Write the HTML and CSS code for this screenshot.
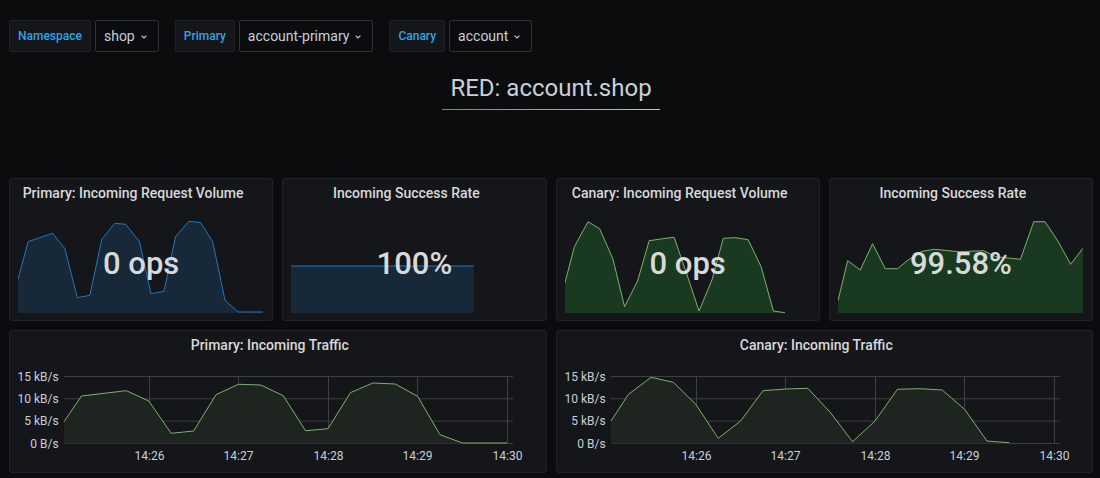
FILE: index.html
```html
<!DOCTYPE html>
<html lang="en">
<head>
<meta charset="utf-8">
<title>RED: account.shop</title>
<link rel="stylesheet" href="styles.css">
</head>
<body>
<div class="page">
  <div class="vars">
    <div class="var-group">
      <span class="var-label">Namespace</span>
      <span class="var-select">shop<svg class="chev" viewBox="0 0 6 4" width="6" height="4"><path d="M0.6 0.6 L3 3 L5.4 0.6" fill="none" stroke="#c7d0d9" stroke-width="1.1"/></svg></span>
    </div>
    <div class="var-group">
      <span class="var-label">Primary</span>
      <span class="var-select">account-primary<svg class="chev" viewBox="0 0 6 4" width="6" height="4"><path d="M0.6 0.6 L3 3 L5.4 0.6" fill="none" stroke="#c7d0d9" stroke-width="1.1"/></svg></span>
    </div>
    <div class="var-group">
      <span class="var-label">Canary</span>
      <span class="var-select">account<svg class="chev" viewBox="0 0 6 4" width="6" height="4"><path d="M0.6 0.6 L3 3 L5.4 0.6" fill="none" stroke="#c7d0d9" stroke-width="1.1"/></svg></span>
    </div>
  </div>

  <div class="header">
    <h1 class="dash-title">RED: account.shop</h1>
  </div>

  <div class="grid4">
    <div class="panel">
      <div class="panel-title">Primary: Incoming Request Volume</div>
      <div class="stat-body">
        <svg class="spark" viewBox="0 0 245 100" preserveAspectRatio="none">
          <polygon class="fill-blue" points="0,66.3 10.1,28.7 34.6,20.3 46.9,35.7 59.2,84.7 71.8,82.3 83.7,26.3 96.7,10.3 107.6,11.3 121.2,28.3 132.8,80.7 145.8,78.3 157.4,23.7 170.7,8.3 182.6,9.7 194.6,29 206.8,87.3 219.8,99 245,99 245,100 0,100"/>
          <polyline class="line-blue" points="0,66.3 10.1,28.7 34.6,20.3 46.9,35.7 59.2,84.7 71.8,82.3 83.7,26.3 96.7,10.3 107.6,11.3 121.2,28.3 132.8,80.7 145.8,78.3 157.4,23.7 170.7,8.3 182.6,9.7 194.6,29 206.8,87.3 219.8,99 245,99"/>
        </svg>
        <span class="stat-value">0 ops</span>
      </div>
    </div>
    <div class="panel">
      <div class="panel-title">Incoming Success Rate</div>
      <div class="stat-body">
        <svg class="spark" viewBox="0 0 245 100" preserveAspectRatio="none">
          <polygon class="fill-blue" points="0,53 182.6,53 182.6,100 0,100"/>
          <polyline class="line-blue" points="0,53 182.6,53"/>
        </svg>
        <span class="stat-value">100%</span>
      </div>
    </div>
    <div class="panel">
      <div class="panel-title">Canary: Incoming Request Volume</div>
      <div class="stat-body">
        <svg class="spark" viewBox="0 0 245 100" preserveAspectRatio="none">
          <polygon class="fill-green" points="0,69.7 9.4,33.7 23,8.7 34.6,15.7 47.9,46 59.5,93.7 72.5,68 84.1,27.7 97.7,25.7 109,24.3 122.3,63 133.9,98 146.8,67 158.1,25.3 170.3,24.7 183,26.7 195.9,53.7 208.2,98 219.8,99.7 219.8,100 0,100"/>
          <polyline class="line-green" points="0,69.7 9.4,33.7 23,8.7 34.6,15.7 47.9,46 59.5,93.7 72.5,68 84.1,27.7 97.7,25.7 109,24.3 122.3,63 133.9,98 146.8,67 158.1,25.3 170.3,24.7 183,26.7 195.9,53.7 208.2,98 219.8,99.7"/>
        </svg>
        <span class="stat-value">0 ops</span>
      </div>
    </div>
    <div class="panel">
      <div class="panel-title">Incoming Success Rate</div>
      <div class="stat-body">
        <svg class="spark" viewBox="0 0 245 100" preserveAspectRatio="none">
          <polygon class="fill-green" points="0,87.7 9.65,47.7 22.25,57 34.55,30.7 47.25,55.7 59.45,55.7 70.05,47 84.05,38.3 96.35,36.3 120.85,38.7 145.45,37.7 157.75,43.7 182.25,46.3 195.55,8.7 206.85,8.7 219.05,27 232.45,51.3 244.65,35.3 244.65,100 0,100"/>
          <polyline class="line-green" points="0,87.7 9.65,47.7 22.25,57 34.55,30.7 47.25,55.7 59.45,55.7 70.05,47 84.05,38.3 96.35,36.3 120.85,38.7 145.45,37.7 157.75,43.7 182.25,46.3 195.55,8.7 206.85,8.7 219.05,27 232.45,51.3 244.65,35.3"/>
        </svg>
        <span class="stat-value">99.58%</span>
      </div>
    </div>
  </div>

  <div class="grid2">
    <div class="panel">
      <div class="panel-title">Primary: Incoming Traffic</div>
      <svg class="graph" viewBox="0 0 535.5 112" preserveAspectRatio="none">
        <g class="grid">
          <line x1="54" y1="17.5" x2="503" y2="17.5"/>
          <line x1="54" y1="39.8" x2="503" y2="39.8"/>
          <line x1="54" y1="62.1" x2="503" y2="62.1"/>
          <line x1="54" y1="84.5" x2="503" y2="84.5"/>
          <line x1="139.5" y1="17.5" x2="139.5" y2="84.5"/>
          <line x1="228.5" y1="17.5" x2="228.5" y2="84.5"/>
          <line x1="318.5" y1="17.5" x2="318.5" y2="84.5"/>
          <line x1="407.5" y1="17.5" x2="407.5" y2="84.5"/>
          <line x1="497.5" y1="17.5" x2="497.5" y2="84.5"/>
        </g>
        <polygon class="fill-traffic" points="54,62.7 71.5,37 94,34.3 116.4,31.7 138.8,42 161.2,74.3 183.6,72 206,35.7 228.4,25.3 250.8,26 273.2,36.7 295.6,71.7 318,69.7 340.4,33.7 362.8,24 385.2,25 407.6,37.3 430,75.7 452.4,84 474.8,84 497.2,84 497.2,84.5 54,84.5"/>
        <polyline class="line-traffic" points="54,62.7 71.5,37 94,34.3 116.4,31.7 138.8,42 161.2,74.3 183.6,72 206,35.7 228.4,25.3 250.8,26 273.2,36.7 295.6,71.7 318,69.7 340.4,33.7 362.8,24 385.2,25 407.6,37.3 430,75.7 452.4,84 474.8,84 497.2,84"/>
        <g class="ylab">
          <text x="48.7" y="21.7">15 kB/s</text>
          <text x="48.7" y="44">10 kB/s</text>
          <text x="48.7" y="66.3">5 kB/s</text>
          <text x="48.7" y="88.7">0 B/s</text>
        </g>
        <g class="xlab">
          <text x="139.5" y="100.5">14:26</text>
          <text x="228.5" y="100.5">14:27</text>
          <text x="318.5" y="100.5">14:28</text>
          <text x="407.5" y="100.5">14:29</text>
          <text x="497.5" y="100.5">14:30</text>
        </g>
      </svg>
    </div>
    <div class="panel">
      <div class="panel-title">Canary: Incoming Traffic</div>
      <svg class="graph" viewBox="0 0 535.5 112" preserveAspectRatio="none">
        <g class="grid">
          <line x1="54" y1="17.5" x2="503" y2="17.5"/>
          <line x1="54" y1="39.8" x2="503" y2="39.8"/>
          <line x1="54" y1="62.1" x2="503" y2="62.1"/>
          <line x1="54" y1="84.5" x2="503" y2="84.5"/>
          <line x1="139.5" y1="17.5" x2="139.5" y2="84.5"/>
          <line x1="228.5" y1="17.5" x2="228.5" y2="84.5"/>
          <line x1="318.5" y1="17.5" x2="318.5" y2="84.5"/>
          <line x1="407.5" y1="17.5" x2="407.5" y2="84.5"/>
          <line x1="497.5" y1="17.5" x2="497.5" y2="84.5"/>
        </g>
        <polygon class="fill-traffic" points="54,62 71.5,35.3 94,18.3 116.4,23.3 138.8,45.3 161.2,79.3 183.6,62 206,31.7 228.4,30 250.8,29.3 273.2,53.3 295.6,82.7 318,62 340.4,30.3 362.8,29.7 385.2,31 407.6,50.3 430,82 452.4,83.7 452.4,84.5 54,84.5"/>
        <polyline class="line-traffic" points="54,62 71.5,35.3 94,18.3 116.4,23.3 138.8,45.3 161.2,79.3 183.6,62 206,31.7 228.4,30 250.8,29.3 273.2,53.3 295.6,82.7 318,62 340.4,30.3 362.8,29.7 385.2,31 407.6,50.3 430,82 452.4,83.7"/>
        <g class="ylab">
          <text x="48.7" y="21.7">15 kB/s</text>
          <text x="48.7" y="44">10 kB/s</text>
          <text x="48.7" y="66.3">5 kB/s</text>
          <text x="48.7" y="88.7">0 B/s</text>
        </g>
        <g class="xlab">
          <text x="139.5" y="100.5">14:26</text>
          <text x="228.5" y="100.5">14:27</text>
          <text x="318.5" y="100.5">14:28</text>
          <text x="407.5" y="100.5">14:29</text>
          <text x="497.5" y="100.5">14:30</text>
        </g>
      </svg>
    </div>
  </div>
</div>
</body>
</html>
```

FILE: styles.css
```css
html, body {
  margin: 0;
  padding: 0;
  background: #0b0c0e;
}

body {
  font-family: Roboto, "Liberation Sans", Arial, sans-serif;
  color: #d8d9da;
  overflow: hidden;
}

.page {
  width: 1084px;
  padding: 20px 7px 0 9px;
}

/* Variables bar */
.vars {
  display: flex;
  gap: 16px;
  height: 32px;
}

.var-group {
  display: flex;
  gap: 4px;
}

.var-label {
  box-sizing: border-box;
  height: 32px;
  display: flex;
  align-items: center;
  padding: 0 8px;
  background: #141619;
  border: 1px solid #202226;
  border-radius: 2px;
  color: #33a2e5;
  font-size: 12px;
  font-weight: 500;
}

.var-select {
  box-sizing: border-box;
  height: 32px;
  display: flex;
  align-items: center;
  gap: 6px;
  padding: 0 11px 0 8px;
  background: #0b0c0e;
  border: 1px solid #2c3235;
  border-radius: 2px;
  color: #c7d0d9;
  font-size: 14px;
}

.chev {
  display: block;
  margin-top: 1px;
}

/* Dashboard title */
.header {
  display: flex;
  justify-content: center;
  margin-top: 22px;
}

.dash-title {
  margin: 0;
  padding: 0 8px 7px;
  font-size: 24px;
  font-weight: 400;
  line-height: 28px;
  color: #c7d0d9;
  border-bottom: 1px solid transparent;
  border-image: linear-gradient(90deg, #f05a28, #fbca0a) 1;
}

/* Panels */
.grid4 {
  display: grid;
  grid-template-columns: repeat(4, 1fr);
  gap: 9px;
  margin-top: 68px;
}

.grid2 {
  display: grid;
  grid-template-columns: repeat(2, 1fr);
  gap: 9px;
  margin-top: 9px;
}

.panel {
  box-sizing: border-box;
  height: 143px;
  background: #141619;
  border: 1px solid #202226;
  border-radius: 3px;
  display: flex;
  flex-direction: column;
  overflow: hidden;
}

.panel-title {
  height: 28px;
  line-height: 29px;
  padding: 0 24px 0 8px;
  text-align: center;
  font-size: 14px;
  font-weight: 500;
  color: #d8d9da;
  white-space: nowrap;
}

.stat-body {
  flex: 1;
  position: relative;
  display: flex;
  align-items: center;
  justify-content: center;
}

.spark {
  position: absolute;
  left: 8px;
  right: 9px;
  bottom: 7px;
  height: 100px;
  width: calc(100% - 17px);
}

.stat-value {
  position: relative;
  font-size: 31px;
  font-weight: 500;
  color: #d8d9da;
}

.fill-blue { fill: #172838; stroke: none; }
.line-blue { fill: none; stroke: #1f78c1; stroke-width: 1; vector-effect: non-scaling-stroke; }
.fill-green { fill: #193a20; stroke: none; }
.line-green { fill: none; stroke: #7eb26d; stroke-width: 1; vector-effect: non-scaling-stroke; }

.graph {
  display: block;
  width: 100%;
  height: 112px;
}

.grid line {
  stroke: #3d3f43;
  stroke-width: 1;
  vector-effect: non-scaling-stroke;
}

.fill-traffic { fill: #1e2520; stroke: none; }
.line-traffic { fill: none; stroke: #7eb26d; stroke-width: 1; vector-effect: non-scaling-stroke; }

.ylab text {
  font-family: Roboto, "Liberation Sans", Arial, sans-serif;
  font-size: 12px;
  fill: #c7d0d9;
  text-anchor: end;
}

.xlab text {
  font-family: Roboto, "Liberation Sans", Arial, sans-serif;
  font-size: 12px;
  fill: #c7d0d9;
  text-anchor: middle;
}
```
